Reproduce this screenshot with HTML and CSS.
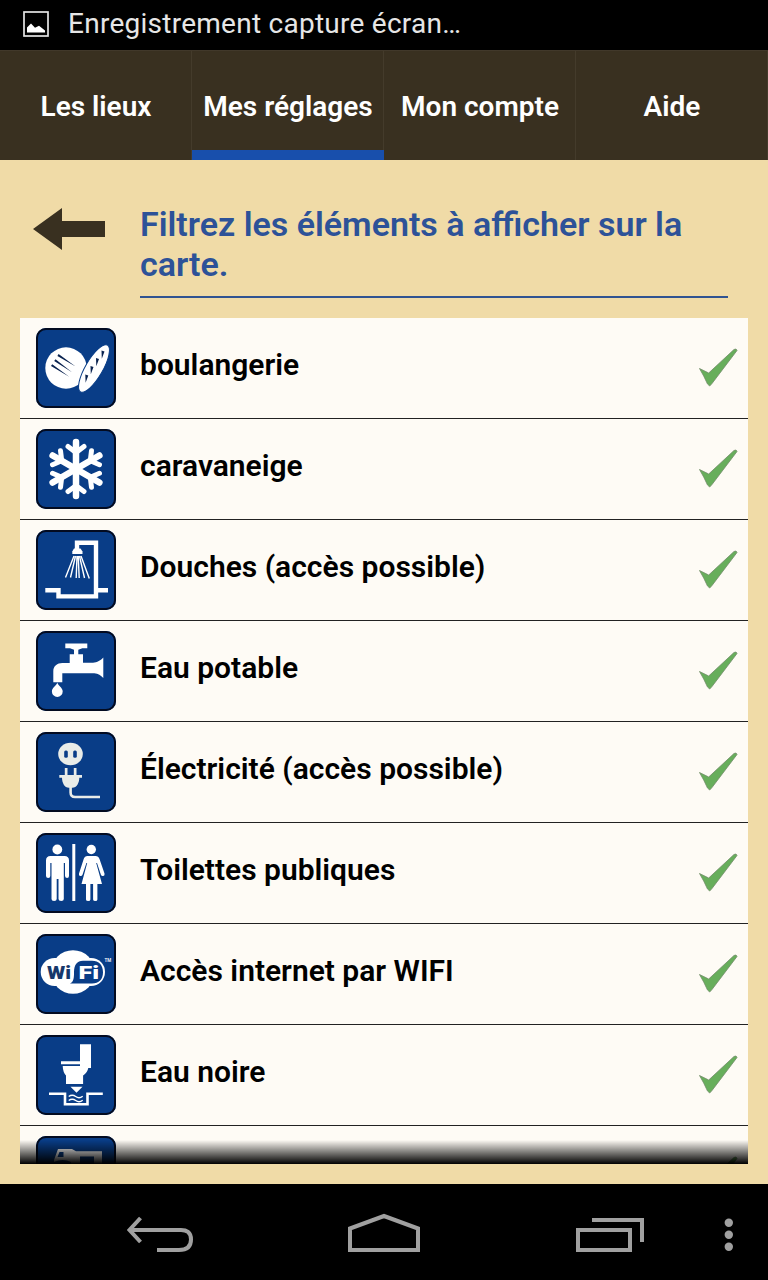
FILE: index.html
```
<!DOCTYPE html>
<html lang="fr">
<head>
  <meta charset="utf-8">
  <title>Mes réglages</title>
  <link rel="stylesheet" href="styles.css">
</head>
<body>
  <svg class="defs" width="0" height="0">
    <symbol id="check" viewBox="0 0 40 40">
      <path d="M1.500 20.500L10.700 25 36 1.500Q38.500 0 39 2.500L14 35.500 11.700 38 9.500 36Q6 28 1.500 20.500z" fill="#67ae5b" stroke="#718c68" stroke-width=".8"/>
    </symbol>
  </svg>

  <div class="status-bar">
    <svg width="26" height="26" viewBox="0 0 26 26">
      <rect x="1" y="1" width="24" height="24" fill="none" stroke="#e4e4e4" stroke-width="1.700"/>
      <path d="M4 21.500v-5l4-4 4 4.200 4-2 6 4.800v2z" fill="#fff"/>
    </svg>
    <span>Enregistrement capture écran…</span>
  </div>

  <nav class="tabs">
    <a href="#lieux">Les lieux</a>
    <a href="#reglages" class="active">Mes réglages</a>
    <a href="#compte">Mon compte</a>
    <a href="#aide">Aide</a>
  </nav>

  <main class="content">
    <header class="title-row">
      <svg class="arrow" width="72" height="42" viewBox="0 0 72 42">
        <path d="M0 21L29 0v13h43v16H29v13z" fill="#393020"/>
      </svg>
      <h1>Filtrez les éléments à afficher sur la carte.</h1>
    </header>

    <ul class="filters">
      <li>
        <svg class="icon" viewBox="0 0 80 80">
          <circle cx="30" cy="40" r="20.700"/>
          <path class="slash" d="M22.600 26l17 12.500L21.400 28zM19.500 31.200l16.500 13L18.200 33.100zM16.200 36.200l17 12.500L15 38.100z"/>
          <ellipse cx="58" cy="40.500" rx="8.700" ry="27" transform="rotate(30 58 40.500)" stroke="#093d87" stroke-width="1"/>
          <path class="slash" d="M65.500 22.500l3 1-2.700 7.300zM60 30l3 1-2.700 7.300zM54.500 38l3 1-2.700 7.300zM49.300 46.500l3 1-2.700 7.300z"/>
        </svg>
        <span>boulangerie</span>
        <svg class="check"><use href="#check"/></svg>
      </li>
      <li>
        <svg class="icon" viewBox="0 0 80 80">
          <g class="line flake">
            <path d="M40 13v54M40 13v54" transform="rotate(0 40 40)"/>
            <path d="M40 13v54" transform="rotate(60 40 40)"/>
            <path d="M40 13v54" transform="rotate(120 40 40)"/>
          </g>
          <g class="line twigs">
            <path d="M32 17.500l8 6 8-6M32 62.500l8-6 8 6"/>
            <path d="M32 17.500l8 6 8-6M32 62.500l8-6 8 6" transform="rotate(60 40 40)"/>
            <path d="M32 17.500l8 6 8-6M32 62.500l8-6 8 6" transform="rotate(120 40 40)"/>
          </g>
        </svg>
        <span>caravaneige</span>
        <svg class="check"><use href="#check"/></svg>
      </li>
      <li>
        <svg class="icon" viewBox="0 0 80 80">
          <path class="line" stroke-width="4.400" d="M9.300 60.200h13.200v6.200H60V12.700H41V20M60 60.200h12"/>
          <path d="M38 18.500h6.500l2 3v2.500H36.300v-2.500z"/>
          <path class="line" stroke-width="1.400" d="M38 26l-8.500 21.500M39.500 26l-5 21.500M41 26l-.8 22M42.200 26l1 22M43.500 26l5 22M45 26l8.300 22.500"/>
        </svg>
        <span>Douches (accès possible)</span>
        <svg class="check"><use href="#check"/></svg>
      </li>
      <li>
        <svg class="icon" viewBox="0 0 80 80">
          <path d="M29.300 12.500h22v4.800h-5l-4 1.500v4.500H47v8.500h10c4 0 8-2.500 10.300-5.200V47c-2.500-2.500-5-4.500-9-4.700H26.300v9h-9V40c0-5 4-8 9-8h7.400v-8.700H38v-4.500l-4-1.500h-4.700z"/>
          <path d="M21.300 51.500c.8 3.500 5.400 5 5.400 9a5.400 5.400 0 0 1-10.800 0c0-4 4.600-5.500 5.400-9z"/>
        </svg>
        <span>Eau potable</span>
        <svg class="check"><use href="#check"/></svg>
      </li>
      <li>
        <svg class="icon pale" viewBox="0 0 80 80">
          <ellipse cx="34.500" cy="22" rx="12.300" ry="11.300"/>
          <rect class="cut" x="28.200" y="18.500" width="3.600" height="7.200" rx="1.500"/>
          <rect class="cut" x="37.200" y="18.500" width="3.600" height="7.200" rx="1.500"/>
          <path d="M28.800 36h2.700v7h6.300v-7h2.700v7H46v2.700h-2.700c0 5-2.500 10-7 10h-3.300c-4.500 0-7-5-7-10h-2.700V43h5.500z"/>
          <path d="M34.600 54v6.500q0 4.500 4.500 4.500H64" fill="none" stroke="#e9ece8" stroke-width="2.600"/>
        </svg>
        <span>Électricité (accès possible)</span>
        <svg class="check"><use href="#check"/></svg>
      </li>
      <li>
        <svg class="icon" viewBox="0 0 80 80">
          <circle cx="21.300" cy="16.500" r="4.900"/>
          <path d="M14.500 23h14q4.500 0 4.500 4.500V43q0 2-1.900 2T29 43V30h-1.200v36q0 2-2.600 2t-2.700-2V46h-1.800v20q0 2-2.600 2t-2.600-2V30h-1.200v13q0 2-2.100 2T10 43V27.500Q10 23 14.500 23z"/>
          <path d="M36.300 11h3v57h-3z"/>
          <circle cx="55.300" cy="16.500" r="4.700"/>
          <path d="M51.500 23h8q3 0 4 3l5 14.500q.5 2-1.200 2.500t-2.400-1.300L61 30h-.8L66 51h-4.600v15.500q0 1.500-2.100 1.500t-2.200-1.500V51h-2.700v15.500q0 1.500-2.200 1.500T50 66.500V51h-4.500l5.700-21h-.8l-3.900 11.700q-.8 1.800-2.400 1.300T43 40.500L47.700 26q1-3 3.800-3z"/>
        </svg>
        <span>Toilettes publiques</span>
        <svg class="check"><use href="#check"/></svg>
      </li>
      <li>
        <svg class="icon" viewBox="0 0 80 80">
          <circle cx="37" cy="38" r="21.800"/>
          <rect x="4.700" y="24" width="64.300" height="28" rx="14"/>
          <path class="cut" d="M34 49.500c4-2 4-6 4-11.500 0-7 3-11.200 9-11.200h9c7 0 11 4.500 11 11.400 0 7-4 11.300-11 11.300z"/>
          <text class="wifi" x="11" y="44.500" textLength="24" lengthAdjust="spacingAndGlyphs" fill="#17386b">Wi</text>
          <text class="wifi" x="42.500" y="44.500" textLength="20.500" lengthAdjust="spacingAndGlyphs">Fi</text>
          <text class="tm" x="68.500" y="28">TM</text>
        </svg>
        <span>Accès internet par WIFI</span>
        <svg class="check"><use href="#check"/></svg>
      </li>
      <li>
        <svg class="icon" viewBox="0 0 80 80">
          <path d="M44 9.300h11V33h-2.700q-1 5-5.200 7.500V49H30v-8.500q-3-3-3.300-9.500H44v-1.700H25v-3h19z"/>
          <path d="M34.500 51.700h12l-6 6z"/>
          <path class="line" stroke-width="2.600" d="M13 58.800h16v10.400h22.500V58.800h15.300"/>
          <path class="line" stroke-width="1.400" d="M32.700 61.500q3.500-2.500 7 0t7-.3M32.700 65.500q3.500-2.500 7 0t7-.3"/>
        </svg>
        <span>Eau noire</span>
        <svg class="check"><use href="#check"/></svg>
      </li>
      <li>
        <svg class="icon" viewBox="0 0 80 80">
          <path d="M22 13h14l4 2.300h26V45H18V24z"/>
          <path class="cut" d="M23.500 16h4v5h-6zM44 20.500h14V45H44zM18 26q9-4 17 0v19H18z"/>
        </svg>
        <span></span>
        <svg class="check"><use href="#check"/></svg>
      </li>
    </ul>
  </main>

  <footer class="nav-bar">
    <svg width="768" height="96" viewBox="0 0 768 96" fill="none" stroke="#a0a0a0" stroke-width="4">
      <path d="M157 66h22q12 0 12-10.500T179 46h-49M140.500 34l-11 12 11 12"/>
      <path d="M350 66V44.500L384 32l34 12.500V66z"/>
      <path d="M578 46h52v20h-52zM592 36h50v22"/>
      <g fill="#a0a0a0" stroke="none">
        <circle cx="728.800" cy="38.800" r="4.200"/>
        <circle cx="728.800" cy="50.800" r="4.200"/>
        <circle cx="728.800" cy="62.800" r="4.200"/>
      </g>
    </svg>
  </footer>
</body>
</html>
```

FILE: styles.css
```
* {
  box-sizing: border-box;
}
body {
  margin: 0;
  height: 1280px;
  display: flex;
  flex-direction: column;
  overflow: hidden;
  font-family: Roboto, sans-serif;
  background-color: #f0dba7;
}
.defs {
  display: none;
}
.status-bar {
  height: 50px;
  padding: 0 23px 3px;
  display: flex;
  align-items: center;
  gap: 19px;
  background-color: #000;
  color: #e6e6e6;
  font-size: 28px;
  letter-spacing: 0.26px;
}
.tabs {
  height: 110px;
  display: flex;
  background-color: #393020;
}
.tabs a {
  flex: 1 1 0;
  display: flex;
  align-items: center;
  justify-content: center;
  border-top: 1px solid #41382a;
  box-shadow: inset -1px 0 #443b2b;
  padding-top: 2px;
  color: #fff;
  font-size: 28px;
  font-weight: 600;
  white-space: nowrap;
  text-decoration: none;
}
.tabs .active {
  box-shadow: inset 0 -10px #184fac, inset -1px 0 #443b2b;
}
.content {
  flex: 1;
  padding: 44px 20px 20px;
  min-height: 0;
}
.title-row {
  height: 114px;
  padding: 0 20px 0 13px;
  display: flex;
  align-items: flex-start;
  gap: 35px;
}
.arrow {
  flex: none;
  margin-top: 4px;
}
h1 {
  flex: 1;
  height: 94px;
  margin: 0;
  border-bottom: 2px solid #305391;
  color: #2d5298;
  font-size: 34px;
  font-weight: 600;
  line-height: 40px;
}
.filters {
  position: relative;
  height: 846px;
  margin: 0;
  padding: 0;
  overflow: hidden;
  list-style: none;
  background-color: #fefbf5;
}
.filters::after {
  content: "";
  position: absolute;
  left: 0;
  right: 0;
  bottom: 0;
  height: 24px;
  background: linear-gradient(transparent, #000);
}
.filters li {
  height: 101px;
  padding: 0 10px 0 16px;
  display: flex;
  align-items: center;
  gap: 24px;
  border-bottom: 1px solid #222;
  color: #000;
  font-size: 30px;
  font-weight: 600;
}
.filters span {
  flex: 1;
  padding-bottom: 8px;
}
.icon {
  width: 80px;
  height: 80px;
  flex: none;
  border-radius: 10px;
  background-color: #093d87;
  box-shadow: inset 0 0 0 2px #030b20;
  fill: #fff;
}
.pale {
  fill: #e9ece8;
}
.cut {
  fill: #093d87;
}
.slash {
  fill: #0a2350;
}
.line {
  fill: none;
  stroke: #fff;
}
.flake {
  stroke-width: 6.5px;
  stroke-linecap: round;
}
.twigs {
  stroke-width: 5px;
  stroke-linecap: round;
}
.check {
  width: 40px;
  height: 40px;
  flex: none;
}
.wifi {
  font-size: 18px;
  font-weight: 900;
}
.tm {
  font-size: 4.5px;
}
.nav-bar {
  height: 96px;
  background-color: #000;
}
```
